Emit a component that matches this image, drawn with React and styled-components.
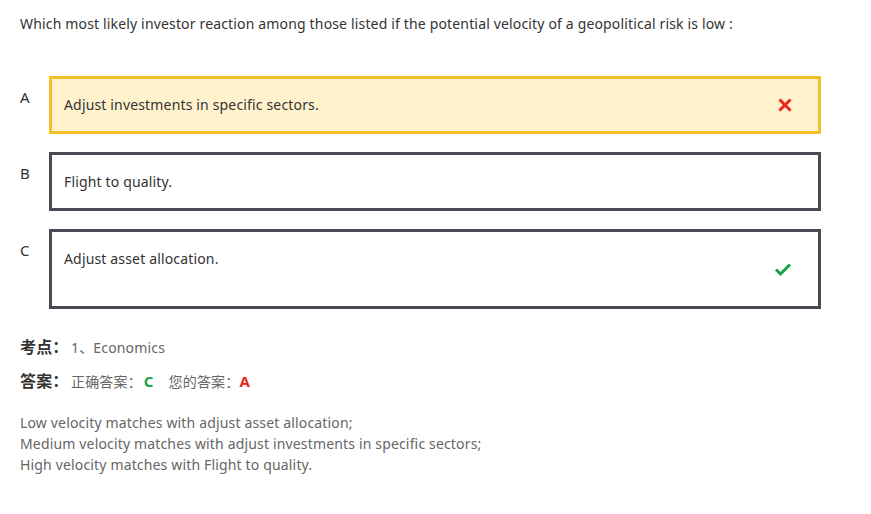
import styled, { createGlobalStyle } from 'styled-components'

const Global = createGlobalStyle`
	body {
		margin: 0;
		background: #fff;
		font-family: 'Noto Sans', 'Noto Sans CJK SC', sans-serif;
		color: #333;
		letter-spacing: 0.16px;
	}
`

const Page = styled.div`
	padding: 13px 20px 20px 20px;
`

const Question = styled.p`
	margin: 0 0 41px 0;
	font-size: 14px;
	line-height: 22px;
	color: #333;
`

const Options = styled.div`
	display: flex;
	flex-direction: column;
	gap: 18px;
	width: 801px;
`

const Row = styled.div`
	display: flex;
	align-items: flex-start;
`

const Letter = styled.span`
	width: 29px;
	padding-top: 11px;
	font-size: 15px;
	line-height: 20px;
	color: #333;
`

const Box = styled.div`
	flex: 1;
	display: flex;
	align-items: center;
	justify-content: space-between;
	box-sizing: border-box;
	min-height: ${(p) => p.$h}px;
	padding: 0 26px 0 12px;
	border: 3px solid ${(p) => (p.$picked ? '#f4c02a' : '#4a4a52')};
	background: ${(p) => (p.$picked ? '#fff2cc' : '#fff')};
	font-size: 14px;
	color: #333;
`

const Label = styled.span`
	align-self: ${(p) => (p.$top ? 'flex-start' : 'center')};
	padding-top: ${(p) => (p.$top ? '16px' : '0')};
	line-height: 22px;
`

const Meta = styled.div`
	margin-top: 25px;
	display: flex;
	flex-direction: column;
	gap: 10px;
`

const MetaLine = styled.div`
	display: flex;
	align-items: baseline;
	font-size: 14px;
	color: #666;
`

const MetaKey = styled.span`
	font-size: 16px;
	font-weight: 700;
	color: #333;
	width: 51px;
`

const Mark = styled.span`
	font-weight: 700;
	font-size: 15px;
	color: ${(p) => p.$c};
	margin: 0 ${(p) => p.$mr || 0}px 0 ${(p) => p.$ml || 0}px;
`

const Explain = styled.p`
	margin: 20px 0 0 0;
	font-size: 14px;
	line-height: 21px;
	color: #666;
`

const Cross = () => (
	<svg width="14" height="14" viewBox="0 0 14 14">
		<path d="M2.5 2.5 L11.5 11.5 M11.5 2.5 L2.5 11.5" stroke="#e8261c" strokeWidth="3" strokeLinecap="square" />
	</svg>
)

const Check = () => (
	<svg width="18" height="15" viewBox="0 0 18 15">
		<path d="M2 7.5 L6.5 12 L16 2.5" stroke="#16a34a" strokeWidth="3" fill="none" />
	</svg>
)

const options = [
	{ key: 'A', text: 'Adjust investments in specific sectors.', picked: true, icon: <Cross />, h: 58 },
	{ key: 'B', text: 'Flight to quality.', h: 59 },
	{ key: 'C', text: 'Adjust asset allocation.', icon: <Check />, h: 80, top: true },
]

export default function App() {
	return (
		<Page>
			<Global />
			<Question>
				Which most likely investor reaction among those listed if the potential velocity of a geopolitical risk is low :
			</Question>
			<Options>
				{options.map((o) => (
					<Row key={o.key}>
						<Letter>{o.key}</Letter>
						<Box $picked={o.picked} $h={o.h}>
							<Label $top={o.top}>{o.text}</Label>
							{o.icon}
						</Box>
					</Row>
				))}
			</Options>
			<Meta>
				<MetaLine>
					<MetaKey>考点：</MetaKey>
					<span>1、Economics</span>
				</MetaLine>
				<MetaLine>
					<MetaKey>答案：</MetaKey>
					<span>正确答案：</span>
					<Mark $c="#16a34a" $ml={2} $mr={15}>C</Mark>
					<span>您的答案：</span>
					<Mark $c="#e8261c">A</Mark>
				</MetaLine>
			</Meta>
			<Explain>
				Low velocity matches with adjust asset allocation;
				<br />
				Medium velocity matches with adjust investments in specific sectors;
				<br />
				High velocity matches with Flight to quality.
			</Explain>
		</Page>
	)
}
